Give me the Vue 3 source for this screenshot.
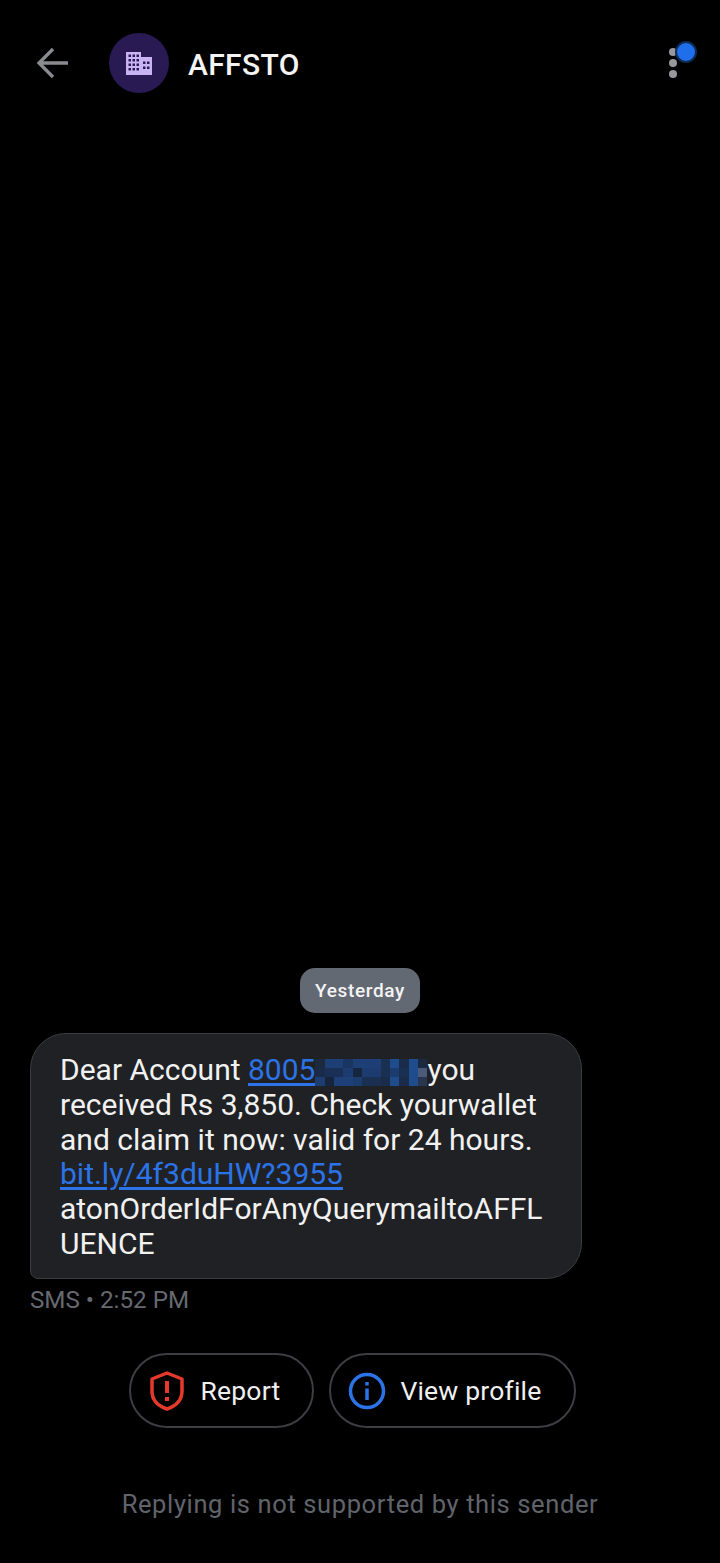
<script setup>
// blurred-out part of the number, 3 rows of 12
const pixels = [
  '#1c2a40', '#1d3f75', '#1d3f75', '#1a3560', '#1d3f75', '#1d3f75', '#1d3f75', '#1a3050', '#1f4c8c', '#1a2c4a', '#1f4c8c', '#1b2a40',
  '#1a2a48', '#1a2f55', '#1a2f55', '#1c3c70', '#16263f', '#1c3c70', '#1c3c70', '#1a3050', '#1c3c70', '#1a3050', '#1f4c8c', '#4a5a78',
  '#1d3c70', '#17253c', '#1d4078', '#1d4078', '#1c3c70', '#1a3050', '#1a3050', '#1a2c4a', '#1f4c8c', '#1a2c4a', '#1f4c8c', '#2a3650'
]
</script>

<template>
  <div class="screen">
    <header class="top-bar">
      <svg class="back" viewBox="0 0 32 32" width="32" height="32">
        <path d="M32 16H4M17 2 3 16l14 14" fill="none" stroke="#8a8b90" stroke-width="3.300" />
      </svg>
      <div class="avatar">
        <svg viewBox="0 0 26 23" width="26" height="23">
          <path fill="#c9b3f2" fill-rule="evenodd" d="M0 0h15v5h11v18H0zM2.500 2.500V5H5V2.500zm4 0V5H9V2.500zm4 0V5H13V2.500zM2.500 7v2.500H5V7zm4 0v2.500H9V7zm4 0v2.500H13V7zM2.500 11.500V14H5v-2.500zm4 0V14H9v-2.500zm4 0V14H13v-2.500zM2.500 16v2.500H5V16zm4 0v2.500H9V16zm4 0v2.500H13V16zM17 9.500V12h2.500V9.500zm4 0V12h2.500V9.500zM17 14.500V17h2.500v-2.500zm4 0V17h2.500v-2.500z" />
        </svg>
      </div>
      <h1 class="name">AFFSTO</h1>
      <div class="menu">
        <span class="dot"></span>
        <span class="dot"></span>
        <span class="dot"></span>
        <span class="badge"></span>
      </div>
    </header>

    <main class="thread">
      <div class="date-chip">Yesterday</div>
      <div class="bubble">
        <div class="line">Dear Account <span class="link">8005</span><span class="pixels"><i v-for="(c, i) in pixels" :key="i" :style="{ background: c }"></i></span>you</div>
        <div class="line">received Rs 3,850. Check yourwallet</div>
        <div class="line">and claim it now: valid for 24 hours.</div>
        <div class="line"><span class="link">bit.ly/4f3duHW?3955</span></div>
        <div class="line">atonOrderIdForAnyQuerymailtoAFFL</div>
        <div class="line">UENCE</div>
      </div>
      <div class="meta">SMS • 2:52 PM</div>

      <div class="actions">
        <button class="pill">
          <svg viewBox="0 0 39 42" width="39" height="42">
            <path d="M19 3 34 9v12c0 9-6 15-15 18C10 36 4 30 4 21V9z" fill="none" stroke="#e5392c" stroke-width="3.500" stroke-linejoin="round" />
            <path d="M19 11v12M19 27v4" fill="none" stroke="#e5392c" stroke-width="4" />
          </svg>
          Report
        </button>
        <button class="pill">
          <svg viewBox="0 0 38 38" width="38" height="38">
            <circle cx="19" cy="19" r="16.500" fill="none" stroke="#2b73e6" stroke-width="3.500" />
            <path d="M19 16.500V28M19 10v3.500" fill="none" stroke="#2b73e6" stroke-width="3.500" />
          </svg>
          View profile
        </button>
      </div>

      <p class="no-reply">Replying is not supported by this sender</p>
    </main>
  </div>
</template>

<style>
body {
  background: #000;
}
</style>

<style scoped>
.screen {
  width: 720px;
  height: 1563px;
  display: flex;
  flex-direction: column;
  background: #000;
  font-family: Roboto, "Liberation Sans", sans-serif;
  color: #f1f1f1;
}

.top-bar {
  display: flex;
  align-items: center;
  height: 60px;
  margin-top: 33px;
  padding: 0 36px;
}

.back {
  flex-shrink: 0;
  overflow: visible;
}

.avatar {
  width: 60px;
  height: 60px;
  margin-left: 41px;
  border-radius: 50%;
  background: #2a1a54;
  display: flex;
  align-items: center;
  justify-content: center;
  flex-shrink: 0;
}

.name {
  margin: 2px 0 0 19px;
  font-size: 30px;
  font-weight: 500;
  color: #f4f4f4;
  letter-spacing: 0.35px;
}

.menu {
  margin-left: auto;
  margin-right: 7px;
  position: relative;
  display: flex;
  flex-direction: column;
  gap: 3px;
}

.dot {
  width: 8px;
  height: 8px;
  border-radius: 50%;
  background: #97989b;
}

.badge {
  position: absolute;
  top: -7px;
  left: 6px;
  width: 18px;
  height: 18px;
  border: 2px solid #0e2a55;
  border-radius: 50%;
  background: #1f6feb;
}

.thread {
  flex: 1;
  display: flex;
  flex-direction: column;
  justify-content: flex-end;
  padding: 0 30px 44px;
}

.date-chip {
  align-self: center;
  width: 120px;
  height: 45px;
  line-height: 46px;
  border-radius: 15px;
  background: #636973;
  text-align: center;
  font-size: 19px;
  font-weight: 500;
  letter-spacing: 0.65px;
  color: #f3f3f3;
}

.bubble {
  width: 552px;
  height: 246px;
  box-sizing: border-box;
  margin-top: 20px;
  padding: 19px 0 0 29px;
  border: 1.500px solid #3c3d40;
  border-radius: 36px 36px 36px 8px;
  background: #202124;
  font-size: 30px;
  white-space: nowrap;
}

.line {
  height: 34.800px;
  line-height: 34.800px;
}

.link {
  color: #2b73e6;
  text-decoration: underline;
  text-underline-offset: 3px;
}

.pixels {
  display: inline-grid;
  grid-template-columns: repeat(12, 1fr);
  grid-template-rows: repeat(3, 1fr);
  width: 112px;
  height: 27px;
  vertical-align: 12px;
}

.pixels i {
  display: block;
}

.meta {
  margin-top: 8px;
  font-size: 24.200px;
  line-height: 27px;
  color: #666a70;
}

.actions {
  display: flex;
  justify-content: center;
  gap: 15px;
  margin-top: 39px;
  margin-right: 16px;
}

.pill {
  display: flex;
  align-items: center;
  gap: 14px;
  height: 75px;
  padding: 0 32px 0 17px;
  border: 2px solid #3d3e41;
  border-radius: 38px;
  background: transparent;
  color: #f0f0f0;
  font-family: inherit;
  font-size: 26.500px;
  letter-spacing: 0.2px;
}

.no-reply {
  margin: 61px 0 0;
  text-align: center;
  font-size: 25.500px;
  line-height: 30px;
  letter-spacing: 0.62px;
  color: #60646a;
}
</style>
